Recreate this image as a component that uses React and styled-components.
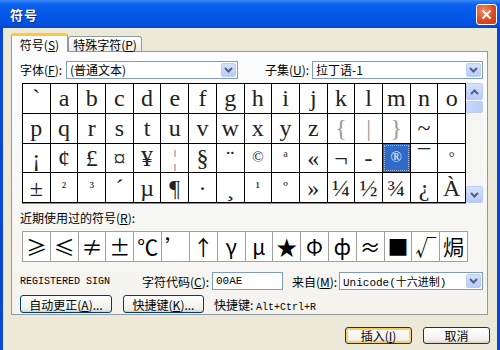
import React from 'react'
import styled, { createGlobalStyle, css } from 'styled-components'

const GlobalStyle = createGlobalStyle`
  html, body { margin: 0; padding: 0; }
  body {
    width: 500px;
    height: 350px;
    overflow: hidden;
    background: #ECE9D8;
    font-family: "Noto Sans CJK SC", "DejaVu Sans", sans-serif;
    font-size: 12px;
    color: #000;
  }
`

const Window = styled.div`
  width: 500px;
  height: 350px;
  display: flex;
  flex-direction: column;
  background: #0A47D6;
`

const TitleBar = styled.div`
  height: 28px;
  flex: none;
  display: flex;
  align-items: center;
  justify-content: space-between;
  padding: 0 3px 0 10px;
  background: linear-gradient(#3A8AF8 0%, #0B60EE 15%, #0458E8 50%, #0252E2 85%, #0847C6 100%);
`

const TitleText = styled.span`
  color: #fff;
  font-weight: bold;
  font-size: 13px;
  letter-spacing: 1px;
  text-shadow: 1px 1px #0A2590;
`

const CloseButton = styled.div`
  width: 19px;
  height: 19px;
  border: 1px solid #fff;
  border-radius: 3px;
  background: radial-gradient(circle at 35% 30%, #F08C6A, #D9481F 60%, #C23A16);
  display: flex;
  align-items: center;
  justify-content: center;
`

const Body = styled.div`
  flex: 1;
  margin: 0 3px;
  background: #ECE9D8;
  padding: 5px 7px 0 8px;
  display: flex;
  flex-direction: column;
`

const TabRow = styled.div`
  display: flex;
  align-items: flex-end;
  height: 18px;
  position: relative;
  z-index: 1;
`

const Tab = styled.div`
  box-sizing: border-box;
  display: flex;
  align-items: center;
  justify-content: center;
  border: 1px solid #919B9C;
  border-bottom: none;
  border-radius: 3px 3px 0 0;
  white-space: nowrap;
  ${p => p.active ? css`
    width: 57px;
    height: 19px;
    margin-bottom: -1px;
    background: #FCFCFE;
    border-top: 3px solid #FFC83C;
  ` : css`
    width: 74px;
    height: 15px;
    background: linear-gradient(#FFFFFF, #ECEBE6);
  `}
`

const Panel = styled.div`
  box-sizing: border-box;
  width: 477px;
  height: 264px;
  border: 1px solid #919B9C;
  background: linear-gradient(#FCFCFE, #F4F3EE);
  padding: 9px 4px 0 8px;
  display: flex;
  flex-direction: column;
`

const Row = styled.div`
  display: flex;
  align-items: center;
  height: ${p => p.h || 17}px;
  margin-top: ${p => p.mt || 0}px;
`

const Label = styled.span`
  width: ${p => p.w}px;
  margin-left: ${p => p.ml || 0}px;
  white-space: nowrap;
  flex: none;
`

const SelectBox = styled.div`
  box-sizing: border-box;
  width: ${p => p.w}px;
  height: 18px;
  border: 1px solid #7F9DB9;
  background: #fff;
  display: flex;
  align-items: center;
  justify-content: space-between;
  padding: 0 1px 0 3px;
  flex: none;
  font-family: ${p => p.mono ? '"Liberation Mono", "Noto Sans CJK SC", monospace' : 'inherit'};
  font-size: ${p => p.mono ? 11 : 12}px;
`

const DropButton = styled.div`
  width: 15px;
  height: 14px;
  border-radius: 2px;
  background: linear-gradient(#D4E0FC, #B9CCF8);
  border: 1px solid #BCCDF5;
  box-sizing: border-box;
  display: flex;
  align-items: center;
  justify-content: center;
`

const TextInput = styled.div`
  box-sizing: border-box;
  width: ${p => p.w}px;
  height: 18px;
  border: 1px solid #7F9DB9;
  background: #fff;
  padding-left: 3px;
  display: flex;
  align-items: center;
  font-family: "Liberation Mono", monospace;
  font-size: 11px;
  flex: none;
`

const GridArea = styled.div`
  display: flex;
  margin: 5px 0 0 2px;
  height: 120px;
`

const SymbolGrid = styled.div`
  box-sizing: border-box;
  width: 444px;
  height: 120px;
  display: grid;
  grid-template-columns: repeat(16, 1fr);
  grid-template-rows: repeat(4, 1fr);
  gap: 1px;
  background: #000;
  border: 1px solid #000;
  box-shadow: 0 1px 0 #8A8A8A;
`

const Cell = styled.div`
  background: ${p => p.selected ? '#316AC5' : '#fff'};
  color: ${p => p.selected ? '#fff' : p.faint ? '#9A9A9A' : '#222'};
  display: flex;
  align-items: center;
  justify-content: center;
  font-family: "Liberation Serif", "DejaVu Serif", serif;
  font-size: ${p => p.small ? 15 : 24}px;
  line-height: 1;
  ${p => p.selected && css`
    outline: 1px dotted #9DB8E8;
    outline-offset: -2px;
  `}
`

const ScrollBar = styled.div`
  width: 17px;
  height: 120px;
  background: #F5F5F1;
  display: flex;
  flex-direction: column;
  justify-content: space-between;
`

const ScrollTop = styled.div`
  display: flex;
  flex-direction: column;
  gap: 1px;
`

const ScrollButton = styled.div`
  box-sizing: border-box;
  width: 17px;
  height: 17px;
  border-radius: 2px;
  border: 1px solid #BCCDF5;
  background: linear-gradient(#D6E2FD, #B6CAF7);
  display: flex;
  align-items: center;
  justify-content: center;
`

const Thumb = styled.div`
  box-sizing: border-box;
  width: 17px;
  height: 12px;
  border-radius: 2px;
  border: 1px solid #BCCDF5;
  background: linear-gradient(90deg, #C9D8FC, #B9CCF8);
`

const RecentGrid = styled.div`
  box-sizing: border-box;
  width: 446px;
  height: 31px;
  margin: 7px 0 0 2px;
  display: grid;
  grid-template-columns: repeat(16, 1fr);
  gap: 1px;
  background: #A0A0A0;
  border: 1px solid #A0A0A0;
`

const RecentCell = styled.div`
  background: #fff;
  display: flex;
  align-items: center;
  justify-content: center;
  font-family: "Noto Sans CJK SC", "DejaVu Sans", sans-serif;
  font-size: 21px;
  line-height: 1;
`

const CharName = styled.span`
  width: 122px;
  font-family: "Liberation Mono", monospace;
  font-size: 10px;
  flex: none;
`

const Mono = styled.span`
  font-family: "Liberation Mono", monospace;
  font-size: 10px;
`

const Button = styled.div`
  box-sizing: border-box;
  width: ${p => p.w}px;
  height: ${p => p.h || 18}px;
  margin-left: ${p => p.ml || 0}px;
  border: 1px solid #003C74;
  border-radius: 3px;
  background: linear-gradient(#FFFFFF, #F0F0EA 80%, #D6D0C5);
  display: flex;
  align-items: center;
  justify-content: center;
  flex: none;
  white-space: nowrap;
  ${p => p.hot && css`
    box-shadow: inset 0 0 0 2px #F9CF6E;
  `}
`

const DialogButtons = styled.div`
  display: flex;
  justify-content: flex-end;
  gap: 11px;
  margin-top: 12px;
`

const Chevron = ({ up }) => (
  <svg width="9" height="6" viewBox="0 0 9 6">
    <path d={up ? 'M1 5 L4.5 1.5 L8 5' : 'M1 1 L4.5 4.5 L8 1'} fill="none" stroke="#4D6185" strokeWidth="2" />
  </svg>
)

const grid = [
  ['`', 'a', 'b', 'c', 'd', 'e', 'f', 'g', 'h', 'i', 'j', 'k', 'l', 'm', 'n', 'o'],
  ['p', 'q', 'r', 's', 't', 'u', 'v', 'w', 'x', 'y', 'z', '{', '|', '}', '~', ''],
  ['¡', '¢', '£', '¤', '¥', '¦', '§', '¨', '©', 'ª', '«', '¬', '-', '®', '¯', '°'],
  ['±', '²', '³', '´', 'µ', '¶', '·', '¸', '¹', 'º', '»', '¼', '½', '¾', '¿', 'À'],
]

const smallOnes = ['²', '³', '¹', 'º', 'ª', '©', '°', '®']
const faintOnes = ['{', '|', '}', '¦']

const recent = ['≥', '≤', '≠', '±', '℃', '’', '↑', 'γ', 'μ', '★', 'Φ', 'ф', '≈', '■', '√', '焗']

export default function App() {
  return (
    <>
      <GlobalStyle />
      <Window>
        <TitleBar>
          <TitleText>符号</TitleText>
          <CloseButton>
            <svg width="11" height="11" viewBox="0 0 11 11">
              <path d="M1.5 1.5 L9.5 9.5 M9.5 1.5 L1.5 9.5" stroke="#fff" strokeWidth="2" />
            </svg>
          </CloseButton>
        </TitleBar>
        <Body>
          <TabRow>
            <Tab active>符号(<u>S</u>)</Tab>
            <Tab>特殊字符(<u>P</u>)</Tab>
          </TabRow>
          <Panel>
            <Row>
              <Label w={46}>字体(<u>F</u>):</Label>
              <SelectBox w={172}>
                <span>(普通文本)</span>
                <DropButton><Chevron /></DropButton>
              </SelectBox>
              <Label w={47} ml={27}>子集(<u>U</u>):</Label>
              <SelectBox w={171}>
                <span>拉丁语-1</span>
                <DropButton><Chevron /></DropButton>
              </SelectBox>
            </Row>
            <GridArea>
              <SymbolGrid>
                {grid.flat().map((ch, i) => (
                  <Cell
                    key={i}
                    selected={ch === '®'}
                    small={smallOnes.includes(ch)}
                    faint={faintOnes.includes(ch)}
                  >
                    {ch}
                  </Cell>
                ))}
              </SymbolGrid>
              <ScrollBar>
                <ScrollTop>
                  <ScrollButton><Chevron up /></ScrollButton>
                  <Thumb />
                </ScrollTop>
                <ScrollButton><Chevron /></ScrollButton>
              </ScrollBar>
            </GridArea>
            <Row h={14} mt={7}>
              <Label>近期使用过的符号(<u>R</u>):</Label>
            </Row>
            <RecentGrid>
              {recent.map((ch, i) => <RecentCell key={i}>{ch}</RecentCell>)}
            </RecentGrid>
            <Row h={18} mt={10}>
              <CharName>REGISTERED SIGN</CharName>
              <Label w={70}>字符代码(<u>C</u>):</Label>
              <TextInput w={71}>00AE</TextInput>
              <Label w={47} ml={9}>来自(<u>M</u>):</Label>
              <SelectBox w={144} mono>
                <span>Unicode(十六进制)</span>
                <DropButton><Chevron /></DropButton>
              </SelectBox>
            </Row>
            <Row h={18} mt={5}>
              <Button w={92}>自动更正(<u>A</u>)...</Button>
              <Button w={81} ml={11}>快捷键(<u>K</u>)...</Button>
              <Label ml={10}>快捷键: <Mono>Alt+Ctrl+R</Mono></Label>
            </Row>
          </Panel>
          <DialogButtons>
            <Button w={67} h={17} hot>插入(<u>I</u>)</Button>
            <Button w={67} h={17}>取消</Button>
          </DialogButtons>
        </Body>
      </Window>
    </>
  )
}
